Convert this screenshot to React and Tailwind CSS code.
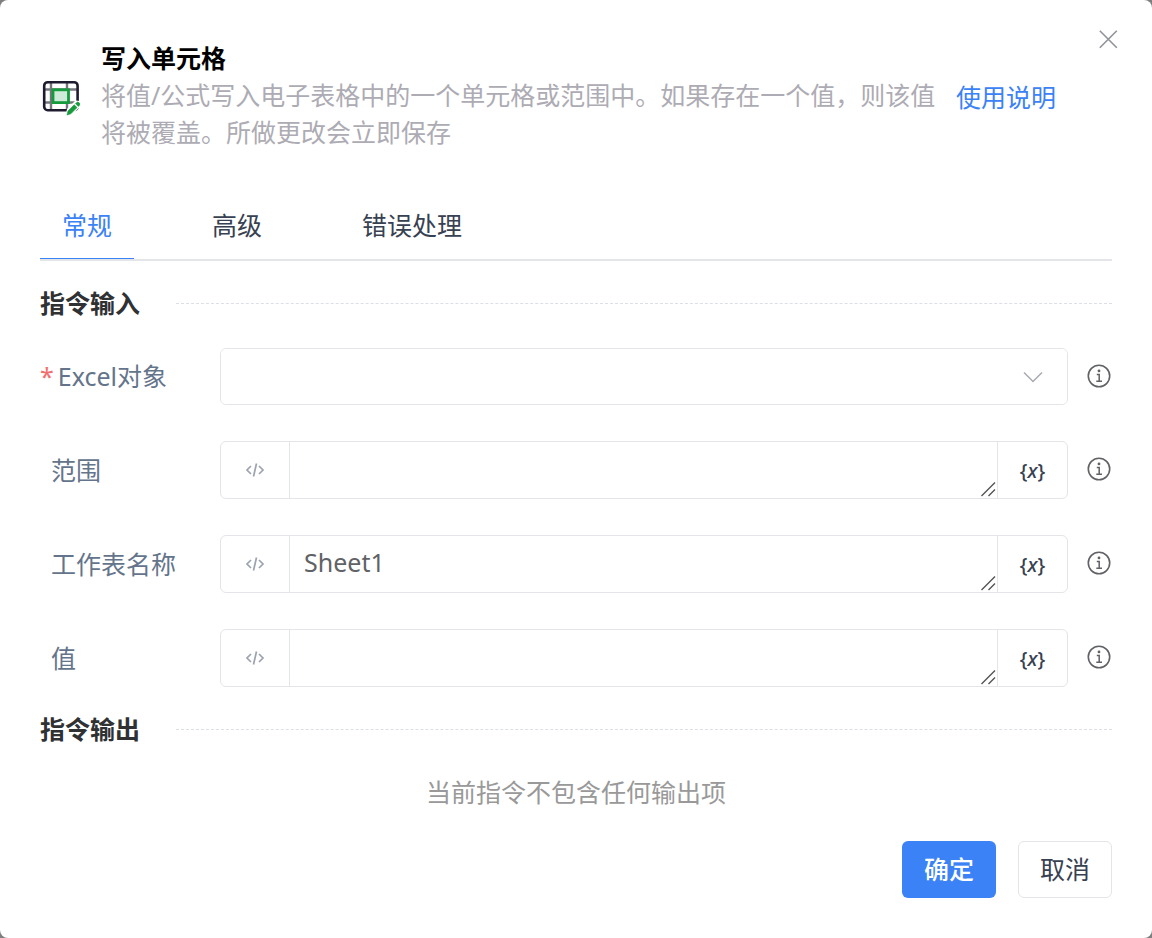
const inputs = [
  { id: "range", label: "范围", value: "" },
  { id: "sheet", label: "工作表名称", value: "Sheet1" },
  { id: "value", label: "值", value: "" },
];

function SheetIcon() {
  return (
    <svg viewBox="0 0 40 36" className="mt-1 h-9 w-10 shrink-0" fill="none" aria-hidden="true">
      <path d="M4 9.5H37M4 22.5H37M11 2V30M27 2V30" stroke="#77757f" strokeWidth="2.4" />
      <rect x="4.2" y="2.2" width="33.4" height="28" rx="3.5" stroke="#1f1c30" strokeWidth="2.6" />
      <rect x="13" y="9.8" width="15.5" height="12.8" fill="#d0ead9" stroke="#159a3c" strokeWidth="2.8" />
      <path d="M25.5 36L27 29L35.5 20.5L41 21V26L30.5 36Z" fill="#fff" />
      <path d="M27 35L28 31L34.2 24.8L37 27.6L30.8 33.8Z" fill="#159a3c" stroke="#159a3c" strokeWidth="0.6" />
      <path d="M35.6 23.6L36.4 22.8A1.9 1.9 0 0 1 39.2 25.6L38.4 26.4Z" fill="#159a3c" stroke="#159a3c" strokeWidth="0.6" />
    </svg>
  );
}

function InfoButton({ label }) {
  return (
    <button type="button" aria-label={`${label} 说明`} className="flex size-6 items-center justify-center text-[#606266]">
      <svg viewBox="0 0 24 24" className="size-6" fill="none" stroke="currentColor" aria-hidden="true">
        <circle cx="12" cy="12" r="10.7" strokeWidth="1.6" />
        <path d="M9.8 10.4H12.2V17M9.3 17.2H15" strokeWidth="1.5" />
        <circle cx="12" cy="6.9" r="1.4" fill="currentColor" stroke="none" />
      </svg>
    </button>
  );
}

function Section({ title }) {
  return (
    <div className="flex items-center gap-9">
      <h2 className="font-bold text-[#303133]">{title}</h2>
      <div className="flex-1 border-t border-dashed border-[#dcdfe6]" />
    </div>
  );
}

function Row({ id, label, required, children }) {
  return (
    <div className="flex items-center">
      <label htmlFor={id} className="w-[180px] shrink-0 text-[#64748b]">
        {required ? <span className="mr-1 text-[#f56c6c]">*</span> : <span className="ml-[11px]" />}
        {label}
      </label>
      <div className="relative flex min-w-0 flex-1 overflow-hidden rounded-md border border-[#e4e5e9]">{children}</div>
      <div className="ml-[19px] mr-px shrink-0 pb-[2px]">
        <InfoButton label={label} />
      </div>
    </div>
  );
}

export default function App() {
  return (
    <div className="min-h-screen bg-[#7f7f7f] font-['Noto_Sans','Noto_Sans_CJK_SC',sans-serif] text-[25px] leading-[37px]">
      <div role="dialog" aria-labelledby="title" className="relative flex min-h-screen flex-col rounded-lg bg-white p-10">
        <button type="button" aria-label="关闭" className="absolute right-[34px] top-[29px] size-5 text-[#909399]">
          <svg viewBox="0 0 20 20" className="size-5" stroke="currentColor" strokeWidth="1.6" aria-hidden="true">
            <path d="M1.8 1.8L18.8 18.8M18.8 1.8L1.8 18.8" />
          </svg>
        </button>

        <header className="flex items-center gap-[21px]">
          <SheetIcon />
          <div className="max-w-[838px]">
            <h1 id="title" className="font-bold text-black">写入单元格</h1>
            <p className="text-[#adabb3]">
              将值/公式写入电子表格中的一个单元格或范围中。如果存在一个值，则该值将被覆盖。所做更改会立即保存
            </p>
          </div>
          <a href="#help" className="-ml-1 mt-1 shrink-0 text-[#3b82f6]">使用说明</a>
        </header>

        <div role="tablist" className="mt-[42px] flex gap-[56px] border-b-2 border-[#e4e5e9]">
          <button type="button" role="tab" aria-selected="true" className="h-[66px] border-b border-[#3b82f6] px-[22px] text-[#3b82f6]">常规</button>
          <button type="button" role="tab" aria-selected="false" className="h-[66px] border-b border-transparent px-[22px] text-[#374151]">高级</button>
          <button type="button" role="tab" aria-selected="false" className="h-[66px] border-b border-transparent px-[22px] text-[#374151]">错误处理</button>
        </div>

        <div className="mt-6">
          <Section title="指令输入" />
          <div className="mt-[26px] flex flex-col gap-9">
            <Row id="excel" label="Excel对象" required>
              <select id="excel" className="h-[55px] w-full appearance-none bg-white px-4 text-[#606266] outline-none">
                <option value=""></option>
              </select>
              <svg viewBox="0 0 20 20" className="pointer-events-none absolute right-6 top-[18px] size-5" fill="none" stroke="#a8abb2" strokeWidth="1.5" aria-hidden="true">
                <path d="M1 5.5L10 14.5L19 5.5" />
              </svg>
            </Row>
            {inputs.map(({ id, label, value }) => (
              <Row key={id} id={id} label={label}>
                <button type="button" aria-label="切换表达式" className="flex w-[69px] shrink-0 items-center justify-center border-r border-[#e4e5e9] text-[#9ca3af]">
                  <svg viewBox="0 0 20 14" className="h-[14px] w-5" fill="none" stroke="currentColor" strokeWidth="1.7" aria-hidden="true">
                    <path d="M6 3L2 7L6 11M14 3L18 7L14 11M11.5 0.5L8.5 13.5" />
                  </svg>
                </button>
                <div className="relative h-14 min-w-0 flex-1">
                  <textarea id={id} defaultValue={value} rows={1} className="block h-full w-full resize-none overflow-hidden px-[14px] py-2 text-[#606266] outline-none" />
                  <svg viewBox="0 0 16 16" className="pointer-events-none absolute bottom-px right-px size-4" stroke="#555" strokeWidth="1.4" aria-hidden="true">
                    <path d="M1.5 15L15 1.5M8.5 15L15 8.5" />
                  </svg>
                </div>
                <button type="button" aria-label="选择变量" className="w-[70px] shrink-0 border-l border-[#e4e5e9] text-[20px] font-medium text-[#374151]">
                  {"{"}<i>x</i>{"}"}
                </button>
              </Row>
            ))}
          </div>
        </div>

        <div className="mt-6">
          <Section title="指令输出" />
          <p className="mt-[26px] text-center text-[#999999]">当前指令不包含任何输出项</p>
        </div>

        <footer className="mt-auto flex justify-end gap-[22px] pt-[29px]">
          <button type="button" className="h-[57px] rounded-md bg-[#3b82f6] px-[22px] font-medium text-white">确定</button>
          <button type="button" className="h-[57px] rounded-md border border-[#e4e5e9] px-[21px] text-[#374151]">取消</button>
        </footer>
      </div>
    </div>
  );
}
